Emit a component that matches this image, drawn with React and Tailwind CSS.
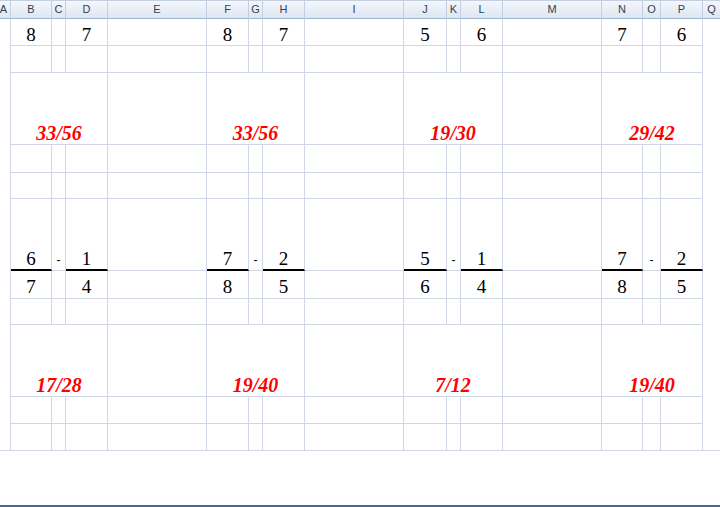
import React from "react";

const GRID = "border-[#d0d7e5]";
const blocks = [
  { top: ["8", "7"], a1: "33/56", fr: ["6", "7", "1", "4"], a2: "17/28" },
  { top: ["8", "7"], a1: "33/56", fr: ["7", "8", "2", "5"], a2: "19/40" },
  { top: ["5", "6"], a1: "19/30", fr: ["5", "6", "1", "4"], a2: "7/12" },
  { top: ["7", "6"], a1: "29/42", fr: ["7", "8", "2", "5"], a2: "19/40" },
];

function Cell({ children, className = "" }) {
  return (
    <div className={`border-r border-b ${GRID} flex items-end justify-center overflow-hidden ${className}`}>
      {children}
    </div>
  );
}

function Num({ v, pb = "pb-[1px]" }) {
  return <span className={`text-[19px] leading-none text-black ${pb}`}>{v}</span>;
}

function Ans({ v }) {
  return <span className="text-[20px] leading-none font-bold italic text-[#ff0000] pb-[1px]">{v}</span>;
}

function EdgeA({ last }) {
  return <div className={`border-r ${GRID} ${last ? "border-b" : ""}`} />;
}
function EdgeQ({ last }) {
  return <div className={`${last ? `border-b ${GRID}` : ""}`} />;
}

function blockCells(bi, kind) {
  const b = blocks[bi];
  const hasE = bi < 3;
  const e = hasE ? <Cell key={`e${bi}${kind}`} /> : null;
  if (kind === "top") {
    return [
      <Cell key={`b${bi}`}><Num v={b.top[0]} /></Cell>,
      <Cell key={`c${bi}`} />,
      <Cell key={`d${bi}`}><Num v={b.top[1]} /></Cell>,
      e,
    ];
  }
  if (kind === "a1" || kind === "a2") {
    return [
      <Cell key={`m${bi}`} className="col-span-3"><Ans v={kind === "a1" ? b.a1 : b.a2} /></Cell>,
      e,
    ];
  }
  if (kind === "num") {
    return [
      <Cell key={`b${bi}`} className="border-b-2 border-b-black"><Num v={b.fr[0]} /></Cell>,
      <Cell key={`c${bi}`}><span className="text-[12px] leading-none text-black pb-[4px] font-['Liberation_Sans',sans-serif]">-</span></Cell>,
      <Cell key={`d${bi}`} className="border-b-2 border-b-black"><Num v={b.fr[2]} /></Cell>,
      e,
    ];
  }
  if (kind === "den") {
    return [
      <Cell key={`b${bi}`}><Num v={b.fr[1]} pb="pb-[2px]" /></Cell>,
      <Cell key={`c${bi}`} />,
      <Cell key={`d${bi}`}><Num v={b.fr[3]} pb="pb-[2px]" /></Cell>,
      e,
    ];
  }
  return [<Cell key={`b${bi}`} />, <Cell key={`c${bi}`} />, <Cell key={`d${bi}`} />, e];
}

const rows = ["top", "empty", "a1", "empty", "empty", "num", "den", "empty", "a2", "empty", "empty"];
const headers = ["A", "B", "C", "D", "E", "F", "G", "H", "I", "J", "K", "L", "M", "N", "O", "P", "Q"];

export default function App() {
  return (
    <div className="w-[720px] h-[507px] bg-white overflow-hidden flex flex-col font-['Liberation_Serif',serif]">
      <div className="grid grid-cols-[11px_41px_14px_42px_99px_42px_14px_42px_99px_43px_14px_42px_99px_41px_18px_42px_1fr] grid-rows-[19px_27px_27px_72px_28px_26px_72px_28px_26px_72px_27px_27px]">
        {headers.map((h, i) => (
          <div
            key={h}
            className={`flex items-center overflow-hidden bg-gradient-to-b from-[#f4f7fb] to-[#dde6f2] border-t border-t-[#c3d0e1] border-b border-b-[#9eb6ce] ${
              i < 16 ? "border-r border-r-[#c2cfe0]" : ""
            } ${i === 0 ? "justify-end pr-[3px]" : "justify-center"} text-[11px] leading-none text-[#34414f] font-['Liberation_Sans',sans-serif]`}
          >
            {h}
          </div>
        ))}
        {rows.map((kind, ri) => {
          const isLast = ri === rows.length - 1;
          return (
            <React.Fragment key={ri}>
              <EdgeA last={isLast} />
              {blockCells(0, kind)}
              {blockCells(1, kind)}
              {blockCells(2, kind)}
              {blockCells(3, kind)}
              <EdgeQ last={isLast} />
            </React.Fragment>
          );
        })}
      </div>
      <div className="flex-1" />
      <div className="h-[2px] bg-[#4a6894]" />
    </div>
  );
}
